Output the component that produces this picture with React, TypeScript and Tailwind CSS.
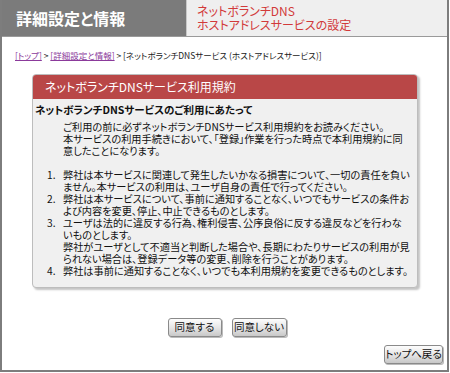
const jp = "font-['Noto_Sans_CJK_JP','Noto_Sans',sans-serif] [font-feature-settings:'palt']";

const items: string[][] = [
  [
    "弊社は本サービスに関連して発生したいかなる損害について、一切の責任を負い",
    "ません。本サービスの利用は、ユーザ自身の責任で行ってください。",
  ],
  [
    "弊社は本サービスについて、事前に通知することなく、いつでもサービスの条件お",
    "よび内容を変更、停止、中止できるものとします。",
  ],
  [
    "ユーザは法的に違反する行為、権利侵害、公序良俗に反する違反などを行わな",
    "いものとします。",
    "弊社がユーザとして不適当と判断した場合や、長期にわたりサービスの利用が見",
    "られない場合は、登録データ等の変更、削除を行うことがあります。",
  ],
  ["弊社は事前に通知することなく、いつでも本利用規約を変更できるものとします。"],
];

function GrayButton({ label, className = "" }: { label: string; className?: string }) {
  return (
    <button
      className={`flex h-[19px] items-center justify-center whitespace-nowrap rounded-[3px] border border-[#8a8a8a] bg-gradient-to-b from-[#fdfdfd] via-[#e6e6e6] to-[#c8c8c8] text-[10.5px] leading-none text-[#111] shadow-[1px_1px_0_#bbb] ${className}`}
    >
      {label}
    </button>
  );
}

export default function App() {
  return (
    <div className={`h-[373px] w-[450px] bg-white ${jp}`}>
      <div className="flex h-[372px] w-[449px] flex-col border-x-2 border-b-2 border-[#7d7d7d]">
        <div className="flex h-[37px] border-b border-[#9a9a9a]">
          <div className="flex w-[184px] items-center bg-[#7b7b7b] pl-[14px] text-[16px] font-bold text-white">
            詳細設定と情報
          </div>
          <div className="flex flex-1 flex-col justify-center border-l border-[#c8c8c8] bg-[#efefef] pl-[10px] text-[12px] leading-[14px] text-[#d23a3a]">
            <span>ネットボランチDNS</span>
            <span>ホストアドレスサービスの設定</span>
          </div>
        </div>

        <div className="mt-[11px] whitespace-nowrap pl-[13px] text-[8.5px] leading-[14px] text-[#222]">
          <a className="text-[#8b3a9b] underline">[トップ]</a>
          <span> &gt; </span>
          <a className="text-[#8b3a9b] underline">[詳細設定と情報]</a>
          <span> &gt; [ネットボランチDNSサービス (ホストアドレスサービス)]</span>
        </div>

        <div className="ml-[30px] mt-[12px] w-[386px] overflow-hidden rounded-[4px] border border-[#bdbdbd] bg-[#f0f0f0] shadow-[2px_2px_2px_#c4c4c4]">
          <div className="flex h-[24px] items-center bg-[#b94747] pl-[12px] text-[12px] text-white">
            ネットボランチDNSサービス利用規約
          </div>
          <div className="whitespace-nowrap pb-[10px] pl-[2px] pt-[3px] text-[10.2px] leading-[12px] text-[#111]">
            <p className="text-[10.5px] font-bold leading-[16px]">ネットボランチDNSサービスのご利用にあたって</p>
            <div className="mt-[3px] pl-[28px]">
              <p>ご利用の前に必ずネットボランチDNSサービス利用規約をお読みください。</p>
              <p>本サービスの利用手続きにおいて、「登録」作業を行った時点で本利用規約に同</p>
              <p>意したことになります。</p>
            </div>
            <ol className="mt-[12px]">
              {items.map((lines, i) => (
                <li key={i} className="flex">
                  <span className="w-[28px] pl-[12px]">{i + 1}.</span>
                  <div>
                    {lines.map((l) => (
                      <p key={l}>{l}</p>
                    ))}
                  </div>
                </li>
              ))}
            </ol>
          </div>
        </div>

        <div className="mt-[30px] flex justify-center gap-[10px] pl-[5px]">
          <GrayButton label="同意する" className="w-[54px]" />
          <GrayButton label="同意しない" className="w-[55px]" />
        </div>

        <div className="mt-[8px] flex justify-end pr-[4px]">
          <GrayButton label="トップへ戻る" className="w-[59px]" />
        </div>
      </div>
    </div>
  );
}
